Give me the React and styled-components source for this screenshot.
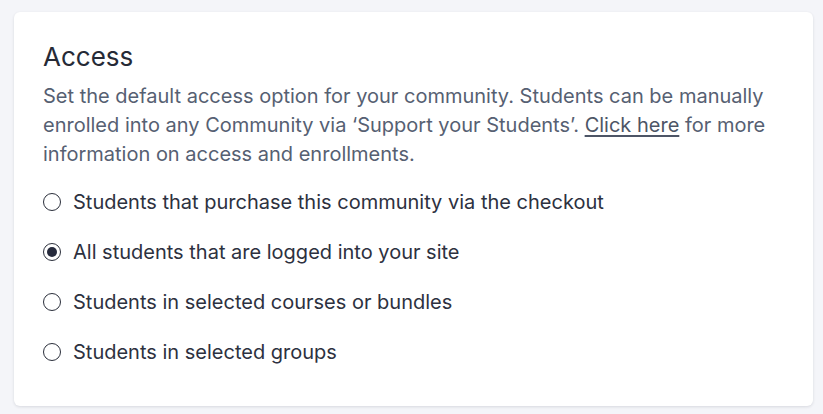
import styled, { createGlobalStyle } from "styled-components";

const Global = createGlobalStyle`
  body {
    margin: 0;
    background: #f4f5f9;
    font-family: Inter, "Noto Sans", sans-serif;
  }
`;

const Page = styled.div`
  padding: 12px 10px 8px 14px;
`;

const Card = styled.section`
  background: #fff;
  border-radius: 6px;
  box-shadow: 0 1px 3px rgba(20, 24, 40, 0.12);
  padding: 30px 29px 20px;
  min-height: 394px;
  box-sizing: border-box;
`;

const Title = styled.h2`
  margin: 0 0 10px;
  font-size: 26px;
  font-weight: 400;
  color: #262a36;
  line-height: 30px;
`;

const Desc = styled.p`
  margin: 0 0 8px;
  font-size: 20px;
  line-height: 29px;
  color: #566072;
`;

const Link = styled.a`
  color: #4d5566;
  text-decoration: underline;
  text-underline-offset: 3px;
`;

const Options = styled.div`
  display: flex;
  flex-direction: column;
`;

const Option = styled.label`
  display: flex;
  align-items: center;
  gap: 12px;
  height: 50px;
  font-size: 20px;
  color: #2d3140;
  cursor: pointer;
`;

const Dot = styled.span`
  width: 18px;
  height: 18px;
  box-sizing: border-box;
  border-radius: 50%;
  border: 1.5px solid #2b2f3b;
  display: flex;
  align-items: center;
  justify-content: center;
  flex-shrink: 0;
  &::after {
    content: "";
    width: 10px;
    height: 10px;
    border-radius: 50%;
    background: ${(p) => (p.$on ? "#262a3c" : "transparent")};
  }
`;

const options = [
  "Students that purchase this community via the checkout",
  "All students that are logged into your site",
  "Students in selected courses or bundles",
  "Students in selected groups",
];

export default function App() {
  return (
    <>
      <Global />
      <Page>
        <Card>
          <Title>Access</Title>
          <Desc>
            Set the default access option for your community. Students can be
            manually enrolled into any Community via ‘Support your Students’.{" "}
            <Link href="#">Click here</Link> for more information on access and
            enrollments.
          </Desc>
          <Options>
            {options.map((o, i) => (
              <Option key={o}>
                <Dot $on={i === 1} />
                {o}
              </Option>
            ))}
          </Options>
        </Card>
      </Page>
    </>
  );
}
